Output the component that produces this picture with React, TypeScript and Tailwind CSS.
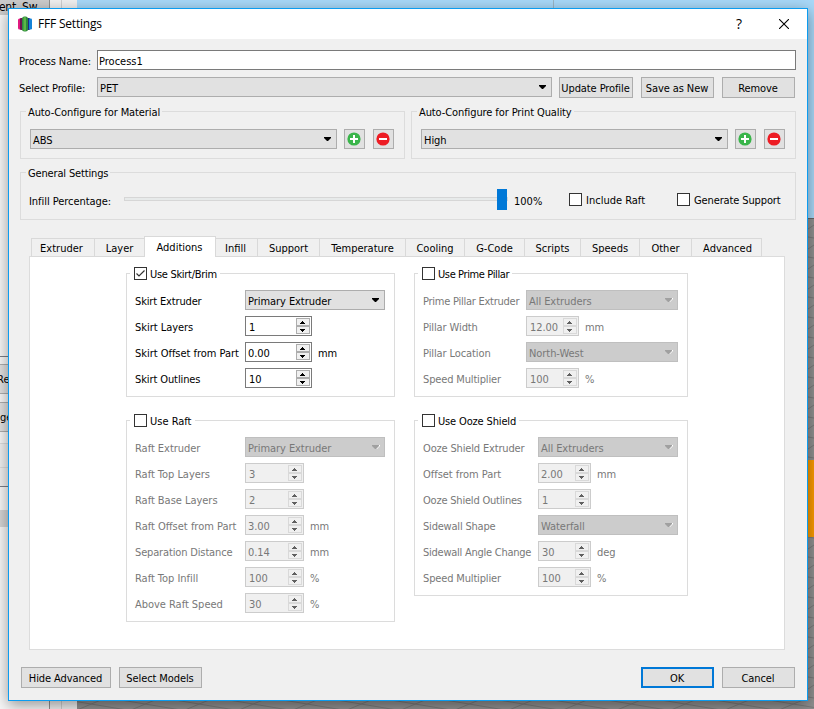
import React from "react";

type Row = {
  label: string;
  kind: "combo" | "spin";
  value: string;
  unit?: string;
  tracking?: string;
};

function Arrow({ disabled = false }: { disabled?: boolean }) {
  return (
    <svg width="9" height="6" viewBox="0 0 9 6" className="shrink-0">
      {disabled && <path d="M8 1H9V2L6 5H5Z" fill="#fff" />}
      <path d="M1 1H8V2L5 5H4L1 2Z" fill={disabled ? "#a0a0a0" : "#000"} />
    </svg>
  );
}

function Combo({ value, disabled = false, className = "" }: { value: string; disabled?: boolean; className?: string }) {
  return (
    <div
      className={
        "flex h-5 items-center justify-between border pr-[4px] pl-[2px] " +
        (disabled ? "border-[#bfbfbf] bg-[#cccccc] text-[#787878] " : "border-[#adadad] bg-[#e1e1e1] ") +
        className
      }
    >
      <span className="pt-[3px] tracking-[-0.06px]">{value}</span>
      <Arrow disabled={disabled} />
    </div>
  );
}

function Spin({ value, disabled = false, className = "" }: { value: string; disabled?: boolean; className?: string }) {
  const half =
    "flex h-2 w-[14px] items-center justify-center border " +
    (disabled ? "border-[#d9d9d9] bg-[#f0f0f0]" : "border-[#adadad] bg-[#f0f0f0]");
  const fill = disabled ? "#606060" : "#000";
  return (
    <div
      className={
        "flex h-5 items-center justify-between border pr-px " +
        (value.startsWith("0") || value.startsWith("2.") || value.startsWith("3.") ? "pl-[2px] " : "pl-[3px] ") +
        (disabled ? "border-[#cccccc] bg-[#f0f0f0] text-[#787878] " : "border-[#7a7a7a] bg-white ") +
        className
      }
    >
      <span className="pt-[3px] tracking-[-0.1px]">{value}</span>
      <div className="flex flex-col">
        <div className={half}>
          <svg width="5" height="3" viewBox="0 0 5 3" className="mr-px">
            <path d="M2 0H3V1H4V2H5V3H0V2H1V1H2Z" fill={fill} />
          </svg>
        </div>
        <div className={half}>
          <svg width="5" height="3" viewBox="0 0 5 3" className="mr-px">
            <path d="M0 0H5V1H4V2H3V3H2V2H1V1H0Z" fill={fill} />
          </svg>
        </div>
      </div>
    </div>
  );
}

function Check({ label, checked = false, className = "gap-1" }: { label: string; checked?: boolean; className?: string }) {
  return (
    <div className={"flex h-[13px] items-center " + className}>
      <span className="flex size-[13px] shrink-0 items-center justify-center border border-[#333] bg-white">
        {checked && (
          <svg width="11" height="11" viewBox="0 0 11 11">
            <path d="M1.5 5.5L4 8L9.5 2.5" fill="none" stroke="#333" strokeWidth="1.2" />
          </svg>
        )}
      </span>
      <span className="pt-[3px]">{label}</span>
    </div>
  );
}

function Btn({
  children,
  primary = false,
  className = "",
}: {
  children: React.ReactNode;
  primary?: boolean;
  className?: string;
}) {
  return (
    <div
      className={
        "flex h-[21px] items-center justify-center bg-[#e1e1e1] pt-[3px] pr-px tracking-[-0.1px] " +
        (primary ? "border-2 border-[#0078d7] " : "border border-[#adadad] ") +
        className
      }
    >
      {children}
    </div>
  );
}

function IconBtn({ minus = false }: { minus?: boolean }) {
  return (
    <div className="flex h-5 w-[21px] items-center border border-[#adadad] bg-[#e1e1e1] pl-[2px]">
      <svg width="14" height="14" viewBox="0 0 14 14">
        <circle cx="7" cy="7" r="6.6" fill={minus ? "#ed1c24" : "#39b54a"} />
        <path d={minus ? "M3 7H11" : "M3 7H11M7 3V11"} stroke="#fff" strokeWidth="2" />
      </svg>
    </div>
  );
}

function AutoGroup({ title, value }: { title: string; value: string }) {
  return (
    <div className="h-12 w-[385px] border border-[#dcdcdc]">
      <div className="-mt-[6px] ml-[5px] h-[14px] w-fit bg-[#f0f0f0] px-[2px] tracking-[-0.1px]">{title}</div>
      <div className="mt-[9px] ml-[9px] flex">
        <Combo value={value} className="mr-[7px] w-[307px]" />
        <IconBtn />
        <div className="w-2" />
        <IconBtn minus />
      </div>
    </div>
  );
}

function FormGroup({
  title,
  titleTracking = "tracking-normal",
  checked = false,
  rows,
  className,
  labelWidth,
  comboWidth,
  spinWidth,
}: {
  title: string;
  titleTracking?: string;
  checked?: boolean;
  rows: Row[];
  className: string;
  labelWidth: string;
  comboWidth: string;
  spinWidth: string;
}) {
  return (
    <div className={"border border-[#dcdcdc] pl-2 " + className}>
      <div className="-mt-[7px] -ml-[5px] w-fit bg-white pr-[3px] pl-1">
        <Check label={title} checked={checked} className={"gap-[3px] " + titleTracking} />
      </div>
      <div className={"mt-[10px] flex flex-col gap-[6px] " + (checked ? "" : "text-[#787878]")}>
        {rows.map((r) => (
          <div key={r.label} className="flex h-5 items-center">
            <span className={"pt-[3px] " + (r.tracking ?? "tracking-[-0.03px]") + " " + labelWidth}>{r.label}</span>
            {r.kind === "combo" ? (
              <Combo value={r.value} disabled={!checked} className={comboWidth} />
            ) : (
              <Spin value={r.value} disabled={!checked} className={spinWidth} />
            )}
            {r.unit && <span className="pt-[3px] pl-[6px] tracking-[-0.1px]">{r.unit}</span>}
          </div>
        ))}
      </div>
    </div>
  );
}

const tabs = [
  { name: "Extruder", w: "w-[63px] pr-[3px]" },
  { name: "Layer", w: "w-[50px]" },
  { name: "Additions", w: "w-[72px] pr-px" },
  { name: "Infill", w: "w-[41px] pr-[2px]" },
  { name: "Support", w: "w-[62px]" },
  { name: "Temperature", w: "w-[86px]" },
  { name: "Cooling", w: "w-[59px]" },
  { name: "G-Code", w: "w-[60px]" },
  { name: "Scripts", w: "w-[56px]" },
  { name: "Speeds", w: "w-[59px]" },
  { name: "Other", w: "w-[52px]" },
  { name: "Advanced", w: "w-[71px] pl-[2px]" },
];

const skirt: Row[] = [
  { label: "Skirt Extruder", kind: "combo", value: "Primary Extruder", tracking: "tracking-[-0.15px]" },
  { label: "Skirt Layers", kind: "spin", value: "1" },
  { label: "Skirt Offset from Part", kind: "spin", value: "0.00", unit: "mm" },
  { label: "Skirt Outlines", kind: "spin", value: "10", tracking: "tracking-[-0.1px]" },
];
const raft: Row[] = [
  { label: "Raft Extruder", kind: "combo", value: "Primary Extruder" },
  { label: "Raft Top Layers", kind: "spin", value: "3" },
  { label: "Raft Base Layers", kind: "spin", value: "2" },
  { label: "Raft Offset from Part", kind: "spin", value: "3.00", unit: "mm", tracking: "tracking-normal" },
  { label: "Separation Distance", kind: "spin", value: "0.14", unit: "mm", tracking: "tracking-[-0.15px]" },
  { label: "Raft Top Infill", kind: "spin", value: "100", unit: "%" },
  { label: "Above Raft Speed", kind: "spin", value: "30", unit: "%" },
];
const pillar: Row[] = [
  { label: "Prime Pillar Extruder", kind: "combo", value: "All Extruders", tracking: "tracking-[-0.25px]" },
  { label: "Pillar Width", kind: "spin", value: "12.00", unit: "mm", tracking: "tracking-[-0.1px]" },
  { label: "Pillar Location", kind: "combo", value: "North-West", tracking: "tracking-[-0.1px]" },
  { label: "Speed Multiplier", kind: "spin", value: "100", unit: "%", tracking: "tracking-[-0.15px]" },
];
const ooze: Row[] = [
  { label: "Ooze Shield Extruder", kind: "combo", value: "All Extruders", tracking: "tracking-[-0.16px]" },
  { label: "Offset from Part", kind: "spin", value: "2.00", unit: "mm" },
  { label: "Ooze Shield Outlines", kind: "spin", value: "1", tracking: "tracking-[-0.2px]" },
  { label: "Sidewall Shape", kind: "combo", value: "Waterfall", tracking: "tracking-[-0.2px]" },
  { label: "Sidewall Angle Change", kind: "spin", value: "30", unit: "deg", tracking: "tracking-[-0.25px]" },
  { label: "Speed Multiplier", kind: "spin", value: "100", unit: "%", tracking: "tracking-[-0.15px]" },
];

function Logo() {
  return (
    <svg width="14" height="16" viewBox="0 0 14 16">
      <rect x="0" y="2.5" width="4" height="11" rx="1.5" fill="#e01a80" />
      <rect x="2" y="2" width="3" height="12" rx="1" fill="#6b1450" />
      <rect x="9" y="2" width="3" height="12" rx="1" fill="#1b2a80" />
      <rect x="11" y="2.5" width="3" height="11" rx="1.2" fill="#1583d8" />
      <rect x="4" y="0.5" width="6" height="15" rx="2.5" fill="#2c8a3c" />
      <rect x="5.5" y="1" width="2.5" height="14" rx="1" fill="#5cb648" />
    </svg>
  );
}

function Backdrop() {
  return (
    <div className="flex h-full w-full text-[11px]">
      <div className="flex w-[50px] flex-col border-r border-[#909090] bg-[#f7f7f7] whitespace-nowrap">
        <div className="h-[15px] overflow-hidden bg-[#cccccc] leading-[14px]">
          <span className="-ml-px text-[12px] tracking-[-0.3px]">ent. Sw...</span>
        </div>
        <div className="h-[342px] border-b border-[#7a7f88]" />
        <div className="mt-[7px] h-[30px] border-y border-[#adadad] bg-[#e1e1e1] leading-[30px]">
          <span className="-ml-[3px]">Re</span>
        </div>
        <div className="mt-2 h-[30px] border-y border-[#adadad] bg-[#e1e1e1] leading-[30px]">ge</div>
        <div className="mt-[11px] h-[25px] border-y border-[#dcdcdc] bg-[#f0f0f0]" />
        <div className="h-[19px] border-b border-[#7a7f88] bg-[#f0f0f0]" />
        <div className="mt-[23px] h-[17px] bg-[#d4d4d4]" />
      </div>
      <div className="w-[12px] border-r border-[#cfcfcf] bg-[#f0f0f0]" />
      <div className="w-[15px] bg-[#f0f0f0]" />
      <div className="flex flex-1 flex-col">
        <div className="flex h-[218px] bg-[#a8d8f8]">
          <div className="w-[477px] border-r border-[#9ab4c4]" />
        </div>
        <div className="relative flex-1 border-t border-[#666] bg-[#909090]">
          <svg width="737" height="491" className="absolute inset-0" stroke="#7a7a7a" fill="none">
            {Array.from({ length: 24 }, (_, i) => (
              <path key={i} d={`M731 ${10 + i * 20}L737 ${6 + i * 20}M731 ${18 + i * 20}L737 ${19 + i * 20}`} />
            ))}
            {Array.from({ length: 15 }, (_, i) => (
              <path key={"b" + i} d={`M${i * 54} 491L${i * 54 + 24} 481M${i * 54 - 10} 481L${i * 54 + 50} 491`} />
            ))}
          </svg>
          <div className="absolute top-[241px] right-0 h-[77px] w-2 bg-[#fb9a00]" />
        </div>
      </div>
    </div>
  );
}

export default function App() {
  return (
    <div className="relative h-[709px] w-[814px] overflow-hidden font-['DejaVu_Sans_Condensed','DejaVu_Sans',sans-serif] text-[11px] leading-[14px] whitespace-nowrap text-black">
      <Backdrop />
      <div className="absolute top-2 left-2 flex h-[693px] w-[800px] flex-col border border-[#0c9cf0] bg-[#f0f0f0] shadow-[0_4px_14px_rgba(0,0,0,0.4)]">
        <div className="flex h-[30px] items-center bg-white pl-[9px] font-['Open_Sans',sans-serif] text-[12px]">
          <Logo />
          <span className="ml-[6px] flex-1 tracking-[-0.2px]">FFF Settings</span>
          <span className="mr-[37px] text-[14px]">?</span>
          <svg width="10" height="10" viewBox="0 0 10 10" className="mr-[18px]">
            <path d="M0 0L10 10M10 0L0 10" stroke="#000" strokeWidth="1.1" />
          </svg>
        </div>

        <div className="mt-[11px] flex h-5 items-center pl-[10px]">
          <span className="w-[78px] pt-[3px] tracking-[-0.1px]">Process Name:</span>
          <div className="h-5 w-[699px] border border-[#7a7a7a] bg-white pt-1 pl-px">Process1</div>
        </div>
        <div className="mt-[7px] flex h-[21px] pl-[10px]">
          <span className="w-[78px] pt-[5px] tracking-[-0.1px]">Select Profile:</span>
          <Combo value="PET" className="w-[455px]" />
          <Btn className="ml-[7px] w-[74px]">Update Profile</Btn>
          <Btn className="ml-2 w-[73px]">Save as New</Btn>
          <Btn className="ml-2 w-[73px]">Remove</Btn>
        </div>

        <div className="mt-[13px] flex gap-[6px] pl-[11px]">
          <AutoGroup title="Auto-Configure for Material" value="ABS" />
          <AutoGroup title="Auto-Configure for Print Quality" value="High" />
        </div>

        <div className="mt-[13px] ml-[11px] h-12 w-[776px] border border-[#dcdcdc]">
          <div className="-mt-[6px] ml-[5px] h-[14px] w-fit bg-[#f0f0f0] px-[2px] tracking-[-0.15px]">General Settings</div>
          <div className="mt-[8px] flex h-[21px] items-center pl-2">
            <span className="w-[95px] pt-1 tracking-[-0.05px]">Infill Percentage:</span>
            <div className="mb-px h-1 w-[373px] border border-r-0 border-[#d6d6d6] bg-[#e7eaea]" />
            <div className="h-[21px] w-[10px] bg-[#0078d7]" />
            <div className="mb-px h-1 w-px bg-[#d6d6d6]" />
            <span className="w-[61px] pt-1 pl-[6px]">100%</span>
            <div className="w-[108px]">
              <Check label="Include Raft" />
            </div>
            <Check label="Generate Support" className="gap-1 tracking-[-0.12px]" />
          </div>
        </div>

        <div className="relative z-10 mt-4 ml-[22px] flex h-[21px] items-end">
          {tabs.map((t, i) =>
            t.name === "Additions" ? (
              <div key={t.name} className={"flex h-[21px] items-center justify-center border-x border-t border-[#d9d9d9] bg-white pt-[2px] " + t.w}>
                {t.name}
              </div>
            ) : (
              <div
                key={t.name}
                className={
                  "flex h-[19px] items-center justify-center border-t border-b border-[#d9d9d9] pt-[3px] " +
                  (i === 3 ? "" : "border-l ") +
                  (i === 11 ? "border-r " : "") +
                  t.w
                }
              >
                {t.name}
              </div>
            ),
          )}
        </div>
        <div className="-mt-px ml-5 flex h-[394px] w-[756px] gap-[19px] border border-[#dcdcdc] bg-white pt-4 pl-24">
          <div className="flex flex-col gap-[23px]">
            <FormGroup title="Use Skirt/Brim" titleTracking="tracking-[-0.3px]" checked rows={skirt} className="h-[124px] w-[269px]" labelWidth="w-[110px]" comboWidth="w-[140px]" spinWidth="w-[67px]" />
            <FormGroup title="Use Raft" rows={raft} className="h-[202px] w-[269px]" labelWidth="w-[110px]" comboWidth="w-[140px]" spinWidth="w-[59px]" />
          </div>
          <div className="flex flex-col gap-[23px]">
            <FormGroup title="Use Prime Pillar" titleTracking="tracking-[-0.38px]" rows={pillar} className="h-[124px] w-[274px]" labelWidth="w-[103px]" comboWidth="w-[152px]" spinWidth="w-[53px]" />
            <FormGroup title="Use Ooze Shield" titleTracking="tracking-[-0.15px]" rows={ooze} className="h-[176px] w-[274px]" labelWidth="w-[115px]" comboWidth="w-[140px]" spinWidth="w-[53px]" />
          </div>
        </div>

        <div className="mt-[17px] flex gap-2 pl-3">
          <Btn className="w-[90px]">Hide Advanced</Btn>
          <Btn className="w-[83px]">Select Models</Btn>
          <div className="w-[423px]" />
          <Btn primary className="w-[73px]">OK</Btn>
          <Btn className="w-[73px]">Cancel</Btn>
        </div>
      </div>
    </div>
  );
}
